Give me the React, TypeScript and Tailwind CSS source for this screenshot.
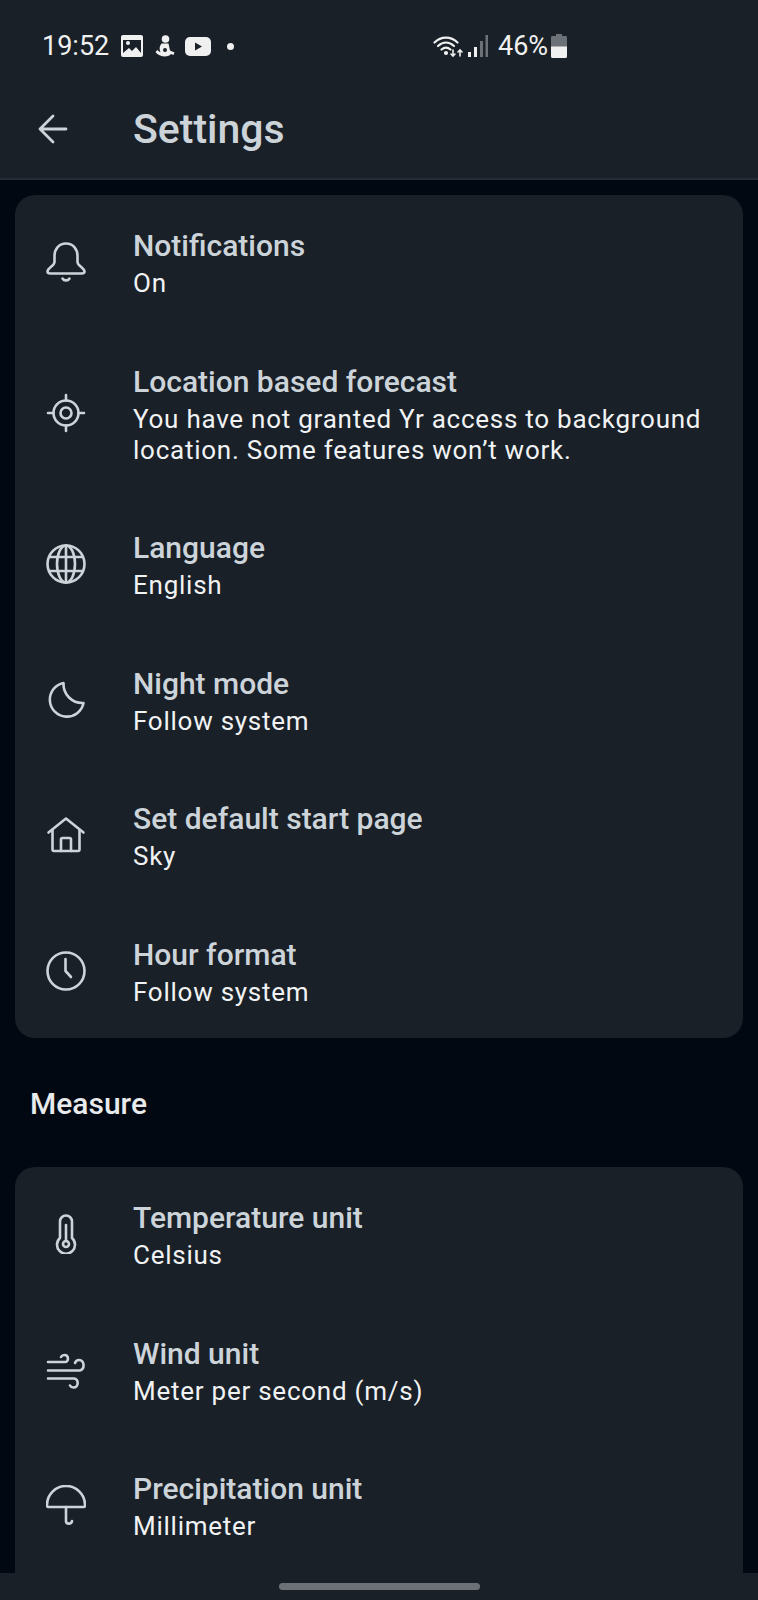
import type { ReactNode } from 'react'

const Icon = ({ children }: { children: ReactNode }) => (
  <svg
    viewBox="0 0 40 40"
    fill="none"
    stroke="currentColor"
    strokeWidth="2.600"
    strokeLinecap="round"
    strokeLinejoin="round"
    className="w-10 h-10 shrink-0 text-[#cdd4d9]"
  >
    {children}
  </svg>
)

const BellIcon = () => (
  <Icon>
    <path d="M20 1.500C13 1.500 8.500 7 8.500 14v6c0 4-6.500 5.500-7 9.500 0 1.500 1.200 2 3 2h31c1.800 0 3-.5 3-2-.5-4-7-5.500-7-9.500v-6c0-7-4.500-12.500-11.500-12.500Z" />
    <path d="M16.500 36.500c1.500 2.500 5.500 2.500 7 0" />
  </Icon>
)

const TargetIcon = () => (
  <Icon>
    <circle cx="20" cy="20" r="12.500" />
    <circle cx="20" cy="20" r="5.500" />
    <path d="M20 2v5.500M20 32.500V38M2 20h5.500M32.500 20H38" />
  </Icon>
)

const GlobeIcon = () => (
  <Icon>
    <circle cx="20" cy="20" r="18.500" />
    <ellipse cx="20" cy="20" rx="9" ry="18.500" />
    <path d="M20 1.500v37M3.500 13h33M3.500 27h33" />
  </Icon>
)

const MoonIcon = () => (
  <Icon>
    <path d="M17.500 3A17 17 0 1 0 37.500 23 19 19 0 0 1 17.500 3Z" />
  </Icon>
)

const HomeIcon = () => (
  <Icon>
    <path d="M2.500 17.500 20 3.500l17.500 14" />
    <path d="M6.500 15v19.500c0 1 .5 1.500 1.500 1.500h24c1 0 1.500-.5 1.500-1.500V15" />
    <path d="M15 36V24.500c0-1 .5-1.500 1.500-1.500h7c1 0 1.500.5 1.500 1.500V36" />
  </Icon>
)

const ClockIcon = () => (
  <Icon>
    <circle cx="20" cy="20" r="18.500" />
    <path d="M19.500 8v12l5.500 6" />
  </Icon>
)

const ThermometerIcon = () => (
  <Icon>
    <path d="M14 24V7.500a6 6 0 0 1 12 0V24a9 9 0 1 1-12 0Z" />
    <circle cx="20" cy="30" r="3" />
    <path d="M20 11v16" />
  </Icon>
)

const WindIcon = () => (
  <Icon>
    <path d="M2 12h17c4 0 4-7-.5-7-2 0-3 1-3.500 2" />
    <path d="M2 20.500h31.500c5.500 0 5.500-10.500-.5-10.500-2.500 0-3.500 1.500-4 3" />
    <path d="M2 28.500h26c5 0 5 9-.5 9-2 0-3-1-3.500-2" />
  </Icon>
)

const UmbrellaIcon = () => (
  <Icon>
    <path d="M1 20a19 19 0 0 1 38 0v.5c0 1-.5 1.500-1.500 1.500h-35C1.500 22 1 21.500 1 20.500Z" />
    <path d="M20 22v14c0 3.500 5.500 3.500 6 0" />
  </Icon>
)

const general = [
  { icon: <BellIcon />, title: 'Notifications', value: 'On' },
  {
    icon: <TargetIcon />,
    title: 'Location based forecast',
    value: 'You have not granted Yr access to background location. Some features won’t work.',
  },
  { icon: <GlobeIcon />, title: 'Language', value: 'English' },
  { icon: <MoonIcon />, title: 'Night mode', value: 'Follow system' },
  { icon: <HomeIcon />, title: 'Set default start page', value: 'Sky' },
  { icon: <ClockIcon />, title: 'Hour format', value: 'Follow system' },
]

const measure = [
  { icon: <ThermometerIcon />, title: 'Temperature unit', value: 'Celsius' },
  { icon: <WindIcon />, title: 'Wind unit', value: 'Meter per second (m/s)' },
  { icon: <UmbrellaIcon />, title: 'Precipitation unit', value: 'Millimeter' },
]

function SettingRow({ icon, title, value }: { icon: ReactNode; title: string; value: string }) {
  return (
    <div className="flex items-center pl-[31px] pr-[30px] pt-[33px] pb-[30.6px] first:pt-[32px] last:pb-[30px]">
      <div className="-mt-[2px] flex w-[87px] shrink-0">{icon}</div>
      <div className="min-w-0 flex-1">
        <div className="text-[30px] leading-[38px] font-medium text-[#cdd4d9]">{title}</div>
        <div className="mt-[3px] text-[26px] leading-[31px] tracking-[0.75px] text-[#f1f2f3]">{value}</div>
      </div>
    </div>
  )
}

function StatusBar() {
  return (
    <div className="flex h-[90px] items-center pt-[2px] pl-[42px] text-[27px] text-[#f0f0f0]">
      <span className="w-[79px]">19:52</span>
      <svg viewBox="0 0 22 22" className="h-[22px] w-[22px] shrink-0">
        <rect width="22" height="22" rx="2" fill="#f0f0f0" />
        <path d="M2 5h18v13l-5-6-4 4-3-3-6 5Z" fill="#192028" />
        <path d="M2 2.500h18v2H2Z" fill="#f0f0f0" />
        <circle cx="7" cy="8" r="2" fill="#f0f0f0" />
      </svg>
      <svg viewBox="0 0 20 22" className="ml-[12px] h-[22px] w-[20px] shrink-0" fill="#f0f0f0">
        <circle cx="10.500" cy="4" r="3.800" />
        <path d="M6.500 8.500h7l1.500 7 4.500 2-1 2.500-2.500-1C14 22.500 4 22.500.5 17l2-2c1 1.200 2 2 3 2.300C4 14 4.500 11 6.500 8.500Z" />
        <circle cx="10" cy="15" r="2" fill="#192028" />
      </svg>
      <svg viewBox="0 0 26 19" className="ml-[10px] h-[19px] w-[26px] shrink-0">
        <rect width="26" height="19" rx="5" fill="#f0f0f0" />
        <path d="M10 5.500v8l7-4Z" fill="#192028" />
      </svg>
      <span className="ml-[16px] h-[7px] w-[7px] rounded-full bg-[#f0f0f0]" />
      <svg viewBox="0 0 30 23" className="ml-[199px] h-[23px] w-[30px] shrink-0" fill="none" stroke="#f0f0f0" strokeWidth="2.200" strokeLinecap="round">
        <path d="M1.500 7.500C8 1 18 1 24.500 7.500" />
        <path d="M5 11c5-4.500 11-4.500 16 0" />
        <path d="M8.500 14.500c3-2.500 6-2.500 9 0" />
        <circle cx="13" cy="18" r="1" fill="#f0f0f0" />
        <path d="M20 15v6M18 19l2 2 2-2M27 21v-6M25 17l2-2 2 2" strokeWidth="1.600" />
      </svg>
      <svg viewBox="0 0 20 22" className="ml-[5px] h-[22px] w-[20px] shrink-0">
        <rect x="0" y="17" width="3" height="5" fill="#f0f0f0" />
        <rect x="6" y="12" width="3" height="10" fill="#f0f0f0" />
        <rect x="12" y="6" width="3" height="16" fill="#6c7077" />
        <rect x="17.500" y="0" width="2.500" height="22" fill="#6c7077" />
      </svg>
      <span className="ml-[10px] w-[53px]">46%</span>
      <svg viewBox="0 0 16 24" className="h-[24px] w-[16px] shrink-0">
        <path d="M5 0h6v2h3.500c1 0 1.500.5 1.500 1.500V22c0 1-.5 2-1.500 2h-13C.5 24 0 23 0 22V3.500C0 2.500.5 2 1.500 2H5Z" fill="#6c7077" />
        <path d="M0 12.500h16V22c0 1-.5 2-1.500 2h-13C.5 24 0 23 0 22Z" fill="#f0f0f0" />
      </svg>
    </div>
  )
}

export default function App() {
  return (
    <div className="flex h-[1600px] w-[758px] flex-col overflow-hidden bg-[#020812] font-[Roboto,sans-serif]">
      <header className="shrink-0 border-b-2 border-[#232b33] bg-[#192028]">
        <StatusBar />
        <div className="flex h-[88px] items-center pl-[38px] pb-[10px]">
          <svg viewBox="0 0 30 30" className="h-[30px] w-[30px] shrink-0" fill="none" stroke="#cdd4d9" strokeWidth="2.800" strokeLinecap="round" strokeLinejoin="round">
            <path d="M28 15H2M15 2 2 15l13 13" />
          </svg>
          <h1 className="ml-[65px] mt-[2px] text-[41px] font-medium text-[#cdd4d9]">Settings</h1>
        </div>
      </header>

      <main className="min-h-0 flex-1 overflow-hidden px-[15px] pt-[15px]">
        <section className="rounded-[20px] bg-[#192028]">
          {general.map((row) => (
            <SettingRow key={row.title} {...row} />
          ))}
        </section>

        <h2 className="flex h-[129px] items-center pt-[2px] pl-[15px] text-[30px] font-medium text-[#e8eaec]">Measure</h2>

        <section className="rounded-t-[20px] bg-[#192028] pb-5">
          {measure.map((row) => (
            <SettingRow key={row.title} {...row} />
          ))}
        </section>
      </main>

      <nav className="flex h-[27px] shrink-0 items-start justify-center bg-[#192028] pt-[10px]">
        <div className="h-[7px] w-[201px] rounded-full bg-[#6c7077]" />
      </nav>
    </div>
  )
}
